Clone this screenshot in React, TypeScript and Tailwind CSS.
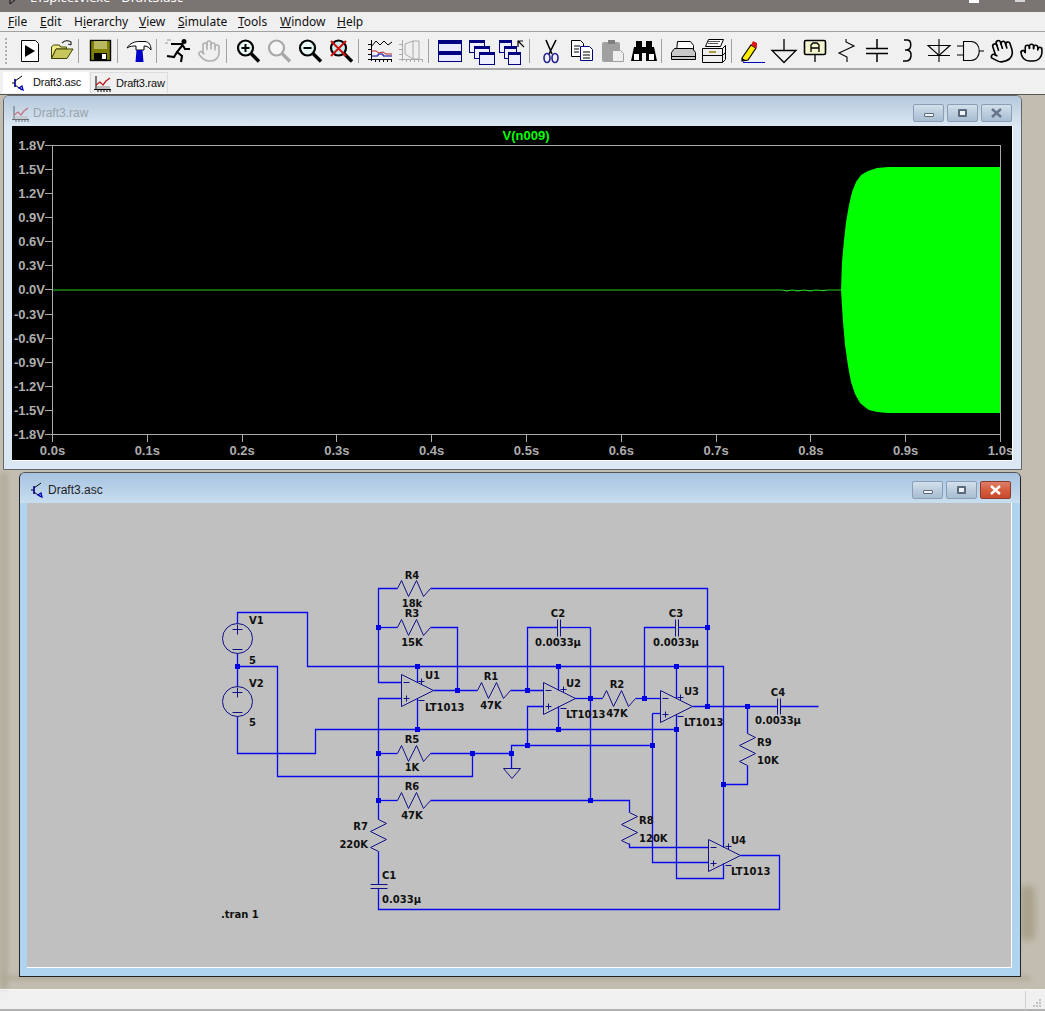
import { Grab, Hand } from 'lucide-react';
import type { ReactNode } from 'react';

type Pt = [number, number];

const WIRE = '#0808ee';
const PART = '#101088';

const menus = [
  { pre: '', key: 'F', rest: 'ile', cls: 'w-[32px]' },
  { pre: '', key: 'E', rest: 'dit', cls: 'w-[34px]' },
  { pre: 'H', key: 'i', rest: 'erarchy', cls: 'w-[65px]' },
  { pre: '', key: 'V', rest: 'iew', cls: 'w-[39px]' },
  { pre: '', key: 'S', rest: 'imulate', cls: 'w-[60px]' },
  { pre: '', key: 'T', rest: 'ools', cls: 'w-[42px]' },
  { pre: '', key: 'W', rest: 'indow', cls: 'w-[57px]' },
  { pre: '', key: 'H', rest: 'elp', cls: 'w-[40px]' },
];

function Ico({ children }: { children: ReactNode }) {
  return (
    <svg width="28" height="28" viewBox="0 0 28 28" fill="none">
      {children}
    </svg>
  );
}

function Lens({ color = '#000', glass = '#eaf8f8', children }: { color?: string; glass?: string; children?: ReactNode }) {
  return (
    <Ico>
      <circle cx="11.5" cy="11" r="7.5" fill={glass} stroke={color} strokeWidth="2.2" />
      <path d="M17 16.5 25 24.5" stroke={color} strokeWidth="3.4" />
      {children}
    </Ico>
  );
}

function Win({ x, y, w = 15, h = 12, tall = 3 }: { x: number; y: number; w?: number; h?: number; tall?: number }) {
  return (
    <g>
      <rect x={x + 0.5} y={y + 0.5} width={w} height={h} fill="#eef" stroke="#000080" />
      <rect x={x} y={y} width={w + 1} height={tall} fill="#000080" />
    </g>
  );
}

function PlotGlyph({ muted }: { muted?: boolean }) {
  const axis = muted ? '#aaa' : '#000';
  return (
    <Ico>
      <path d="M5.5 3v21M2 22.5h24M2 17.5h4M2 12.5h4M2 7.5h4M9.5 22v3M13.5 22v3M17.5 22v3M21.5 22v3M25.5 22v3" stroke={axis} />
      {muted ? (
        <path d="M8 7l8-3 6 0v18h-6L8 17z M16 4v18" stroke="#aaa" />
      ) : (
        <>
          <path d="M5 10 10 4l4 4 4-4 4 4 4-3" stroke="#000" />
          <path d="M5 14h5l3 2 4-1 3 2h6" stroke="#c02020" />
          <path d="M5 19h7v-2h5v2h9" stroke="#0000a0" />
        </>
      )}
    </Ico>
  );
}

const tools: (ReactNode | 'sep')[] = [
  <Ico key="run">
    <path d="M5.5 3.5h14l3 3v18h-17z" fill="#fff" stroke="#000" />
    <path d="M9 8l10 6-10 6z" fill="#000" />
  </Ico>,
  <Ico key="open">
    <path d="M4.5 21.5V10l2-2h6l1 2h6v2H9z" fill="#eeee88" stroke="#404000" />
    <path d="M4.5 21.5 9 12h17l-6 9.5z" fill="#c6c65a" stroke="#404000" />
    <path d="M15 6c3-3 6-3 9-1v3M24 8l-3-1" stroke="#333" strokeWidth="1.3" />
  </Ico>,
  'sep',
  <Ico key="save">
    <rect x="4.500" y="3.500" width="20" height="20" fill="#808000" stroke="#000" strokeWidth="1.4" />
    <rect x="8" y="4" width="13" height="8" fill="#b8b860" />
    <rect x="8" y="16" width="13" height="7" fill="#000" />
    <rect x="16" y="17" width="4" height="5" fill="#fff" />
  </Ico>,
  'sep',
  <Ico key="build">
    <path d="M2 11C5 6 10 4.500 14 4.500h6c4 .5 6 3.500 6 8.500-2-3-4-4-7-4v4h-8V9c-3 0-6 0-9 2z" fill="#fff" stroke="#000" />
    <path d="M11.500 13h6l1 12h-8z" fill="#0000c8" />
  </Ico>,
  'sep',
  <Ico key="runner">
    <circle cx="20" cy="4.500" r="2.500" fill="#000" />
    <path d="M19 7.500 13 15l5 4-1 6M13 15l-3 5-7-1M7 7h11l3 5h5" stroke="#000" strokeWidth="2.1" />
    <path d="M3 3h4M1 6h3" stroke="#999" />
  </Ico>,
  <Hand key="halt" size={24} color="#b0b0b0" strokeWidth={1.6} />,
  'sep',
  <Lens key="zi">
    <path d="M7.500 11h8M11.500 7v8" stroke="#000" strokeWidth="2" />
  </Lens>,
  <Lens key="zf" color="#a8a8a8" glass="#f6f6f6" />,
  <Lens key="zo">
    <path d="M7.500 11h8" stroke="#000" strokeWidth="2" />
  </Lens>,
  <Lens key="zx" glass="#c8eeee">
    <path d="M4 4l15 15M19 4 4 19" stroke="#d01010" strokeWidth="2" />
  </Lens>,
  'sep',
  <PlotGlyph key="pl" />,
  <PlotGlyph key="pm" muted />,
  'sep',
  <Ico key="tile">
    <rect x="2.500" y="3.500" width="23" height="21" fill="#e8e8ff" stroke="#000080" />
    <rect x="2" y="3" width="24" height="4" fill="#000080" />
    <rect x="2" y="14" width="24" height="4" fill="#000080" />
  </Ico>,
  <Ico key="cascade">
    <Win x={2} y={3} />
    <Win x={7} y={9} />
    <Win x={12} y={15} />
  </Ico>,
  <Ico key="arrange">
    <Win x={1} y={3} w={12} />
    <Win x={6} y={9} w={12} />
    <Win x={10} y={15} w={12} />
    <path d="M20 10V4h5M20 4l6 6" stroke="#000" strokeWidth="1.2" />
  </Ico>,
  'sep',
  <Ico key="cut">
    <path d="M9 3l6 14M19 3 12 17" stroke="#000" strokeWidth="1.6" />
    <ellipse cx="10" cy="21" rx="3" ry="4.500" stroke="#202090" strokeWidth="1.6" />
    <ellipse cx="18" cy="21" rx="3" ry="4.500" stroke="#202090" strokeWidth="1.6" />
  </Ico>,
  <Ico key="copy">
    <path d="M3.500 3.500h9l3 3v13h-12z" fill="#fff" stroke="#000" />
    <path d="M12.500 9.500h9l3 3v11h-12z" fill="#fff" stroke="#000080" />
    <path d="M6 9h6M6 12h5M6 15h5M15 15h7M15 18h7M15 21h7" stroke="#000" />
  </Ico>,
  <Ico key="paste">
    <rect x="3" y="5" width="18" height="20" rx="2" fill="#a0a0a0" />
    <rect x="9" y="3" width="7" height="4" fill="#808080" />
    <path d="M13.500 13.500h8l3 3v8h-11z" fill="#eee" stroke="#a0a0a0" />
  </Ico>,
  <Ico key="find">
    <path d="M4 10h8v14H1zM16 10h8l3 14H16z" fill="#000" />
    <rect x="6" y="4" width="6" height="8" fill="#000" />
    <rect x="16" y="4" width="6" height="8" fill="#000" />
    <rect x="11" y="10" width="6" height="6" fill="#000" />
    <path d="M4 17h5v6H4zM19 17h5v6h-5z" fill="#fff" />
  </Ico>,
  'sep',
  <Ico key="print">
    <path d="M8.500 4.500h13l3 4v6h-17z" fill="#fff" stroke="#000" />
    <path d="M5.500 11.500h18l3 4v7h-24v-7z" fill="#c8c8c8" stroke="#000" />
    <path d="M2.500 19.500h24" stroke="#000" />
  </Ico>,
  <Ico key="printer">
    <path d="M8.500 2.500h15l-3 7h-15z" fill="#fff" stroke="#000" />
    <path d="M8 4.500h12M8 6.500h10" stroke="#555" />
    <path d="M2.500 11.500h20l3-3v14l-3 3h-20z" fill="#eee" stroke="#000" />
    <path d="M2.500 18.500h20l3-3M22.500 11.500v14" stroke="#000" />
    <path d="M9 15h7" stroke="#a0a040" strokeWidth="2" />
  </Ico>,
  'sep',
  <Ico key="pencil">
    <path d="M3 21 12 8l5 3-8 12-6 1z" fill="#ffee00" stroke="#000" strokeWidth="1.2" />
    <path d="M12 8l2-4 4 2 0 4-1 1z" fill="#d81818" />
    <path d="M3 21v3h5z" fill="#000" />
    <path d="M4 25.500h22" stroke="#0000c0" />
  </Ico>,
  <Ico key="gnd">
    <path d="M14 2v11M2 13.500h24L14 25.500z" stroke="#000" strokeWidth="1.3" />
  </Ico>,
  <Ico key="label">
    <rect x="3.500" y="3.500" width="21" height="14" rx="1.500" fill="#f4f4d0" stroke="#000" strokeWidth="1.6" />
    <path d="M10 15V8l2-2h4l2 2v7M10 11h8" stroke="#000" strokeWidth="1.3" />
    <path d="M14 18v7" stroke="#000" strokeWidth="1.3" />
  </Ico>,
  <Ico key="res">
    <path d="M14 2v3l8 4-15 7 8 4v5" stroke="#000" strokeWidth="1.1" />
  </Ico>,
  <Ico key="cap">
    <path d="M14 2v9M14 17v8M3 11.500h22M3 16.500h22" stroke="#000" strokeWidth="1.5" />
  </Ico>,
  <Ico key="ind">
    <path d="M10 3h3c5 0 5 9 0 10h-2 2c6 1 5 11-1 11h-3" stroke="#000" strokeWidth="1.5" />
  </Ico>,
  <Ico key="dio">
    <path d="M14 2v23M3 8.500h22L14 18.500zM3 18.500h22" stroke="#000" strokeWidth="1.1" />
  </Ico>,
  <Ico key="and">
    <path d="M7.500 4.500H15c11 0 11 19 0 19H7.500zM1 9h6M1 18h6M23 14h5" stroke="#000" strokeWidth="1.1" />
  </Ico>,
  <Hand key="h1" size={26} color="#000" strokeWidth={1.5} className="-rotate-[18deg]" />,
  <Grab key="h2" size={25} color="#000" strokeWidth={1.5} />,
];

function TranIcon() {
  return (
    <svg width="14" height="16" viewBox="0 0 14 16" fill="none">
      <path d="M3 4v8M0 8h3M3 6l7-5M3 10l7 5" stroke="#000" />
      <path d="M3 4v8M7 13l4 2-1-4z" stroke="#0000c0" strokeWidth="1.3" />
    </svg>
  );
}

function TraceIcon({ faded }: { faded?: boolean }) {
  return (
    <svg width="17" height="17" viewBox="0 0 17 17" fill="none" className={faded ? 'opacity-50' : ''}>
      <path d="M2 1v14M0 14.500h17M4 15v2M7 15v2M10 15v2M13 15v2M16 15v2" stroke="#000" />
      <path d="M2 10l4-3 3 3 3-4 4-3" stroke="#c01818" strokeWidth="1.3" />
      <rect x="3" y="11" width="13" height="3" fill="#bbb" />
    </svg>
  );
}

function Caption({ children, close }: { children: ReactNode; close?: boolean }) {
  return (
    <div
      className={`flex h-[18px] w-[31px] items-center justify-center rounded-[2px] border ${
        close ? 'border-[#8c3a2a] bg-gradient-to-b from-[#dc8068] via-[#d65c3e] to-[#c8492e]' : 'border-[#8a9fb5] bg-gradient-to-b from-[#d4e0ec] via-[#bccddd] to-[#a9bed2]'
      }`}
    >
      {children}
    </div>
  );
}

function CaptionButtons({ active }: { active?: boolean }) {
  return (
    <div className="flex gap-[3px]">
      <Caption>
        <span className="mt-[3px] h-[4px] w-[10px] rounded-[1px] border border-[#5a6a7a] bg-[#f0f4f8]" />
      </Caption>
      <Caption>
        <span className="h-[8px] w-[9px] rounded-[1px] border-2 border-[#5a6a7a] bg-[#f0f4f8]" />
      </Caption>
      <Caption close={active}>
        <svg width="13" height="10" viewBox="0 0 13 10">
          <path d="M2 1l9 8M11 1 2 9" stroke={active ? '#fff' : '#64748a'} strokeWidth="2.4" />
        </svg>
      </Caption>
    </div>
  );
}

// resistors are drawn as their LTspice zigzag between two wire ends
function hRes(x: number, y: number) {
  const s = [0, 4, 11, 19, 26, 33];
  const o = [0, -8, 8, -8, 8, 0];
  return s.map((d, i) => `${x + d},${y + o[i]}`).join(' ');
}

function vRes(x: number, y: number, len = 32) {
  const k = len / 32;
  const s = [0, 4, 12, 20, 28, 32];
  const o = [0, 8, -8, 8, -8, 0];
  return s.map((d, i) => `${x + o[i]},${y + d * k}`).join(' ');
}

const wires: Pt[][] = [
  [[237, 623], [237, 612], [307, 612], [307, 666], [723, 666], [723, 847]],
  [[237, 653], [237, 686]],
  [[237, 716], [237, 753], [315, 753], [315, 729], [676, 729]],
  [[237, 666], [277, 666], [277, 776], [472, 776], [472, 753]],
  [[378, 753], [397, 753]],
  [[430, 753], [511, 753], [511, 768]],
  [[511, 753], [511, 745], [652, 745]],
  [[527, 745], [527, 706], [543, 706]],
  [[652, 713], [652, 862], [708, 862]],
  [[652, 713], [660, 713]],
  [[397, 588], [378, 588], [378, 682], [401, 682]],
  [[378, 627], [397, 627]],
  [[430, 627], [457, 627], [457, 690]],
  [[430, 588], [707, 588], [707, 706]],
  [[401, 698], [378, 698], [378, 819]],
  [[433, 690], [477, 690]],
  [[510, 690], [543, 690]],
  [[417, 666], [417, 682]],
  [[417, 698], [417, 729]],
  [[378, 800], [397, 800]],
  [[430, 800], [629, 800], [629, 812]],
  [[629, 843], [629, 847], [708, 847]],
  [[378, 851], [378, 884]],
  [[378, 888], [378, 909], [779, 909], [779, 855], [740, 855]],
  [[723, 863], [723, 878], [676, 878], [676, 714]],
  [[676, 666], [676, 698]],
  [[723, 784], [747, 784], [747, 765]],
  [[747, 733], [747, 706]],
  [[558, 666], [558, 690]],
  [[558, 706], [558, 729]],
  [[574, 698], [602, 698]],
  [[635, 698], [660, 698]],
  [[590, 627], [590, 800]],
  [[527, 690], [527, 627], [557, 627]],
  [[560, 627], [590, 627]],
  [[644, 698], [644, 627], [675, 627]],
  [[678, 627], [707, 627]],
  [[692, 706], [777, 706]],
  [[780, 706], [818, 706]],
];

const nodes: Pt[] = [
  [237, 666], [378, 627], [417, 666], [457, 690], [417, 729], [378, 753], [472, 753], [511, 753],
  [378, 800], [527, 690], [527, 745], [558, 666], [558, 729], [590, 698], [590, 800], [644, 698],
  [652, 745], [676, 666], [676, 729], [707, 627], [707, 706], [747, 706], [723, 784],
];

const opamps: Pt[] = [[401, 690], [543, 698], [660, 706], [708, 855]];

const labels: { x: number; y: number; t: string; a?: 'middle' | 'end' }[] = [
  { x: 249, y: 620, t: 'V1' },
  { x: 249, y: 660, t: '5' },
  { x: 249, y: 683, t: 'V2' },
  { x: 249, y: 722, t: '5' },
  { x: 412, y: 575, t: 'R4', a: 'middle' },
  { x: 412, y: 603, t: '18k', a: 'middle' },
  { x: 412, y: 613, t: 'R3', a: 'middle' },
  { x: 412, y: 642, t: '15K', a: 'middle' },
  { x: 425, y: 675, t: 'U1' },
  { x: 425, y: 707, t: 'LT1013' },
  { x: 491, y: 676, t: 'R1', a: 'middle' },
  { x: 491, y: 705, t: '47K', a: 'middle' },
  { x: 412, y: 739, t: 'R5', a: 'middle' },
  { x: 412, y: 767, t: '1K', a: 'middle' },
  { x: 412, y: 786, t: 'R6', a: 'middle' },
  { x: 412, y: 815, t: '47K', a: 'middle' },
  { x: 368, y: 826, t: 'R7', a: 'end' },
  { x: 368, y: 844, t: '220K', a: 'end' },
  { x: 382, y: 875, t: 'C1' },
  { x: 382, y: 899, t: '0.033µ' },
  { x: 221, y: 914, t: '.tran 1' },
  { x: 558, y: 613, t: 'C2', a: 'middle' },
  { x: 558, y: 642, t: '0.0033µ', a: 'middle' },
  { x: 676, y: 613, t: 'C3', a: 'middle' },
  { x: 676, y: 642, t: '0.0033µ', a: 'middle' },
  { x: 566, y: 683, t: 'U2' },
  { x: 566, y: 714, t: 'LT1013' },
  { x: 617, y: 684, t: 'R2', a: 'middle' },
  { x: 617, y: 713, t: '47K', a: 'middle' },
  { x: 684, y: 691, t: 'U3' },
  { x: 684, y: 722, t: 'LT1013' },
  { x: 778, y: 692, t: 'C4', a: 'middle' },
  { x: 778, y: 720, t: '0.0033µ', a: 'middle' },
  { x: 757, y: 742, t: 'R9' },
  { x: 757, y: 760, t: '10K' },
  { x: 639, y: 820, t: 'R8' },
  { x: 639, y: 838, t: '120K' },
  { x: 731, y: 840, t: 'U4' },
  { x: 731, y: 871, t: 'LT1013' },
];

function Schematic() {
  return (
    <svg width="984" height="464" viewBox="27 503 984 464" className="block">
      <g stroke={WIRE} strokeWidth="1.3" fill="none" transform="translate(.5 .5)">
        {wires.map((w, i) => (
          <polyline key={i} points={w.map((p) => p.join(',')).join(' ')} />
        ))}
      </g>
      {nodes.map(([x, y]) => (
        <rect key={`${x}-${y}`} x={x - 2} y={y - 2} width="5" height="5" fill="#0000e0" />
      ))}
      <g stroke={PART} fill="none" transform="translate(.5 .5)">
        <polyline points={hRes(397, 588)} />
        <polyline points={hRes(397, 627)} />
        <polyline points={hRes(397, 753)} />
        <polyline points={hRes(397, 800)} />
        <polyline points={hRes(477, 690)} />
        <polyline points={hRes(602, 698)} />
        <polyline points={vRes(378, 819)} />
        <polyline points={vRes(747, 733)} />
        <polyline points={vRes(629, 812)} />
        <circle cx="237" cy="638" r="15" />
        <circle cx="237" cy="701" r="15" />
        <path d="M232 629h10M237 624v10M232 649h10M232 692h10M237 687v10M232 712h10" />
        <path d="M503 768h17l-8.500 10z" />
        <path d="M557 619v17M560 619v17M675 619v17M678 619v17M777 698v16M780 698v16M370 884h17M370 888h17" />
        {opamps.map(([x, y]) => (
          <g key={x}>
            <path d={`M${x} ${y - 16}v32l32 -16z`} />
            <path d={`M${x + 2} ${y - 8}h6M${x + 2} ${y + 8}h6M${x + 5} ${y + 5}v6M${x + 17} ${y - 9}h6M${x + 20} ${y - 12}v6M${x + 17} ${y + 10}h6`} />
          </g>
        ))}
      </g>
      <g fill="#101010" fontSize="10" fontWeight="700" fontFamily="'DejaVu Sans', sans-serif">
        {labels.map((l) => (
          <text key={`${l.t}-${l.x}-${l.y}`} x={l.x} y={l.y + 4} textAnchor={l.a ?? 'start'}>
            {l.t}
          </text>
        ))}
      </g>
    </svg>
  );
}

const envelope =
  'M841 290 L842 262 L844 240 L846 222 L849 205 L852 192 L856 182 L861 175 L868 171 L877 168 L888 167 L1000 167 L1000 413 L888 413 L877 412 L869 410 L866 408 L860 403 L855 394 L851 382 L848 366 L845 345 L843 322 Z';

function Plot() {
  const yLabels = ['1.8V', '1.5V', '1.2V', '0.9V', '0.6V', '0.3V', '0.0V', '-0.3V', '-0.6V', '-0.9V', '-1.2V', '-1.5V', '-1.8V'];
  const xLabels = ['0.0s', '0.1s', '0.2s', '0.3s', '0.4s', '0.5s', '0.6s', '0.7s', '0.8s', '0.9s', '1.0s'];
  return (
    <svg width="1000" height="334" viewBox="12 126 1000 334" className="block bg-black">
      <path d={envelope} fill="#00ff00" />
      <path d="M53 290H782l5 .8 5-.8 6 .8 6-.8 6 .8 6-.8 7 .6 5-.6H842" stroke="#20d020" strokeWidth="1.2" fill="none" />
      <g stroke="#aaa" fill="none" shapeRendering="crispEdges">
        <rect x="52.500" y="145.500" width="948" height="289" />
        {yLabels.map((_, i) => (
          <path key={i} d={`M45 ${145.5 + i * 24.08}h7`} />
        ))}
        {xLabels.map((_, i) => (
          <path key={i} d={`M${52.5 + i * 94.8} 434v8`} />
        ))}
      </g>
      <g fill="#adadad" fontSize="13" fontWeight="700" fontFamily="'Liberation Sans', sans-serif">
        {yLabels.map((t, i) => (
          <text key={t} x="45" y={150 + i * 24.08} textAnchor="end">
            {t}
          </text>
        ))}
        {xLabels.map((t, i) => (
          <text key={t} x={52.5 + i * 94.8} y="455" textAnchor="middle">
            {t}
          </text>
        ))}
      </g>
      <text x="526" y="140" textAnchor="middle" fill="#00ff00" fontSize="13" fontWeight="700" fontFamily="'Liberation Sans', sans-serif">
        V(n009)
      </text>
    </svg>
  );
}

export default function App() {
  return (
    <div className="flex h-[1011px] w-[1045px] flex-col overflow-hidden bg-[#f0f0f0] font-['Noto_Sans',sans-serif] text-[12px] text-[#111]">
      {/* main frame caption, cut off by the top of the shot */}
      <div className="relative flex h-[12px] shrink-0 justify-between overflow-hidden bg-[#7a7472] text-white">
        <svg width="8" height="5" className="absolute left-[9px] top-0">
          <path d="M1 0v4l5-4" stroke="#111" fill="none" />
        </svg>
        <div className="-mt-[12px] ml-[30px] text-[13px] leading-[18px]">LTspiceIV.exe - Draft3.asc</div>
        <div className="mr-[20px] flex gap-[36px]">
          <span className="h-[3px] w-[10px] bg-white" />
          <span className="h-[2px] w-[10px] bg-white/70" />
        </div>
      </div>

      <div className="flex h-[20px] shrink-0 items-center border-b border-[#a0a0a0] pl-[8px]">
        {menus.map((m) => (
          <span key={m.rest} className={m.cls}>
            {m.pre}
            <span className="underline">{m.key}</span>
            {m.rest}
          </span>
        ))}
      </div>

      <div className="relative flex h-[38px] shrink-0 items-center border-b-2 border-[#a8a8a8] pl-[14px] pt-[1px]">
        <div className="absolute left-[5px] top-[6px] h-[26px] w-[2px] border-l-2 border-dotted border-[#b0b0b0]" />
        {tools.map((t, i) =>
          t === 'sep' ? (
            <div key={i} className="flex h-full w-[8px] shrink-0 items-center">
              <span className="ml-[2px] h-[24px] w-[1px] bg-[#a0a0a0]" />
            </div>
          ) : (
            <div key={i} className="flex w-[31px] shrink-0 items-center justify-center">
              {t}
            </div>
          ),
        )}
      </div>

      <div className="flex h-[25px] shrink-0 items-end gap-[1px] border-b border-[#555] pb-[1px] pl-[3px] font-['Liberation_Sans',sans-serif] text-[11px] tracking-[-0.2px]">
        <div className="flex h-[21px] w-[86px] items-center gap-[7px] bg-white pl-[9px]">
          <TranIcon />
          <span>Draft3.asc</span>
        </div>
        <div className="flex h-[21px] w-[78px] items-center gap-[5px] border border-b-0 border-[#dcdcdc] pl-[3px]">
          <TraceIcon />
          <span>Draft3.raw</span>
        </div>
      </div>

      <div className="relative flex-1 bg-[#c2bdb0]">
        <div className="absolute left-0 top-[378px] h-[516px] w-[8px] bg-[#a8a290] opacity-60 blur-[2px]" />
        <div className="absolute left-[1020px] top-[790px] h-[56px] w-[15px] rounded-full bg-[#aaa28c] blur-[3px]" />
        <div className="absolute left-0 top-[881px] h-[4px] w-[1030px] bg-[#b0aa96] blur-[2px]" />

        <div className="absolute left-[3px] top-0 flex h-[375px] w-[1019px] flex-col rounded-t-[6px] border border-[#666] bg-[#dbe7f2]">
          <div className="flex h-[30px] shrink-0 items-center justify-between rounded-t-[5px] bg-gradient-to-b from-[#b5c8dc] to-[#dbe7f2] pl-[8px] pr-[9px] pt-[4px]">
            <div className="flex items-center gap-[4px]">
              <TraceIcon faded />
              <span className="font-['Liberation_Sans',sans-serif] text-[#98a4ae]">Draft3.raw</span>
            </div>
            <CaptionButtons />
          </div>
          <div className="ml-[8px] w-[1001px] border-b border-r border-white">
            <Plot />
          </div>
        </div>

        <div className="absolute left-[19px] top-[377px] flex h-[505px] w-[1002px] flex-col rounded-t-[6px] border border-[#222] border-t-[#555] bg-[#aed4f0]">
          <div className="flex h-[30px] shrink-0 items-center justify-between rounded-t-[5px] bg-gradient-to-b from-[#a6c3e0] to-[#c8def0] pl-[11px] pr-[9px] pt-[4px]">
            <div className="flex items-center gap-[3px]">
              <TranIcon />
              <span className="font-['Liberation_Sans',sans-serif] text-[#222]">Draft3.asc</span>
            </div>
            <CaptionButtons active />
          </div>
          <div className="ml-[7px] w-[985px] border-b border-r border-white bg-[#c0c0c0]">
            <Schematic />
          </div>
        </div>
      </div>

      <div className="relative h-[22px] shrink-0 border-t border-[#f8f8f8] border-b-2 border-b-[#b0b0b0]">
        <span className="absolute right-[19px] top-[1px] h-[19px] w-[1px] bg-[#d0d0d0]" />
        <svg width="10" height="10" className="absolute bottom-[1px] right-[3px]">
          <path d="M7 1h2v2H7zM4 4h2v2H4zM7 4h2v2H7zM1 7h2v2H1zM4 7h2v2H4zM7 7h2v2H7z" fill="#c4c4c4" />
        </svg>
      </div>
    </div>
  );
}
